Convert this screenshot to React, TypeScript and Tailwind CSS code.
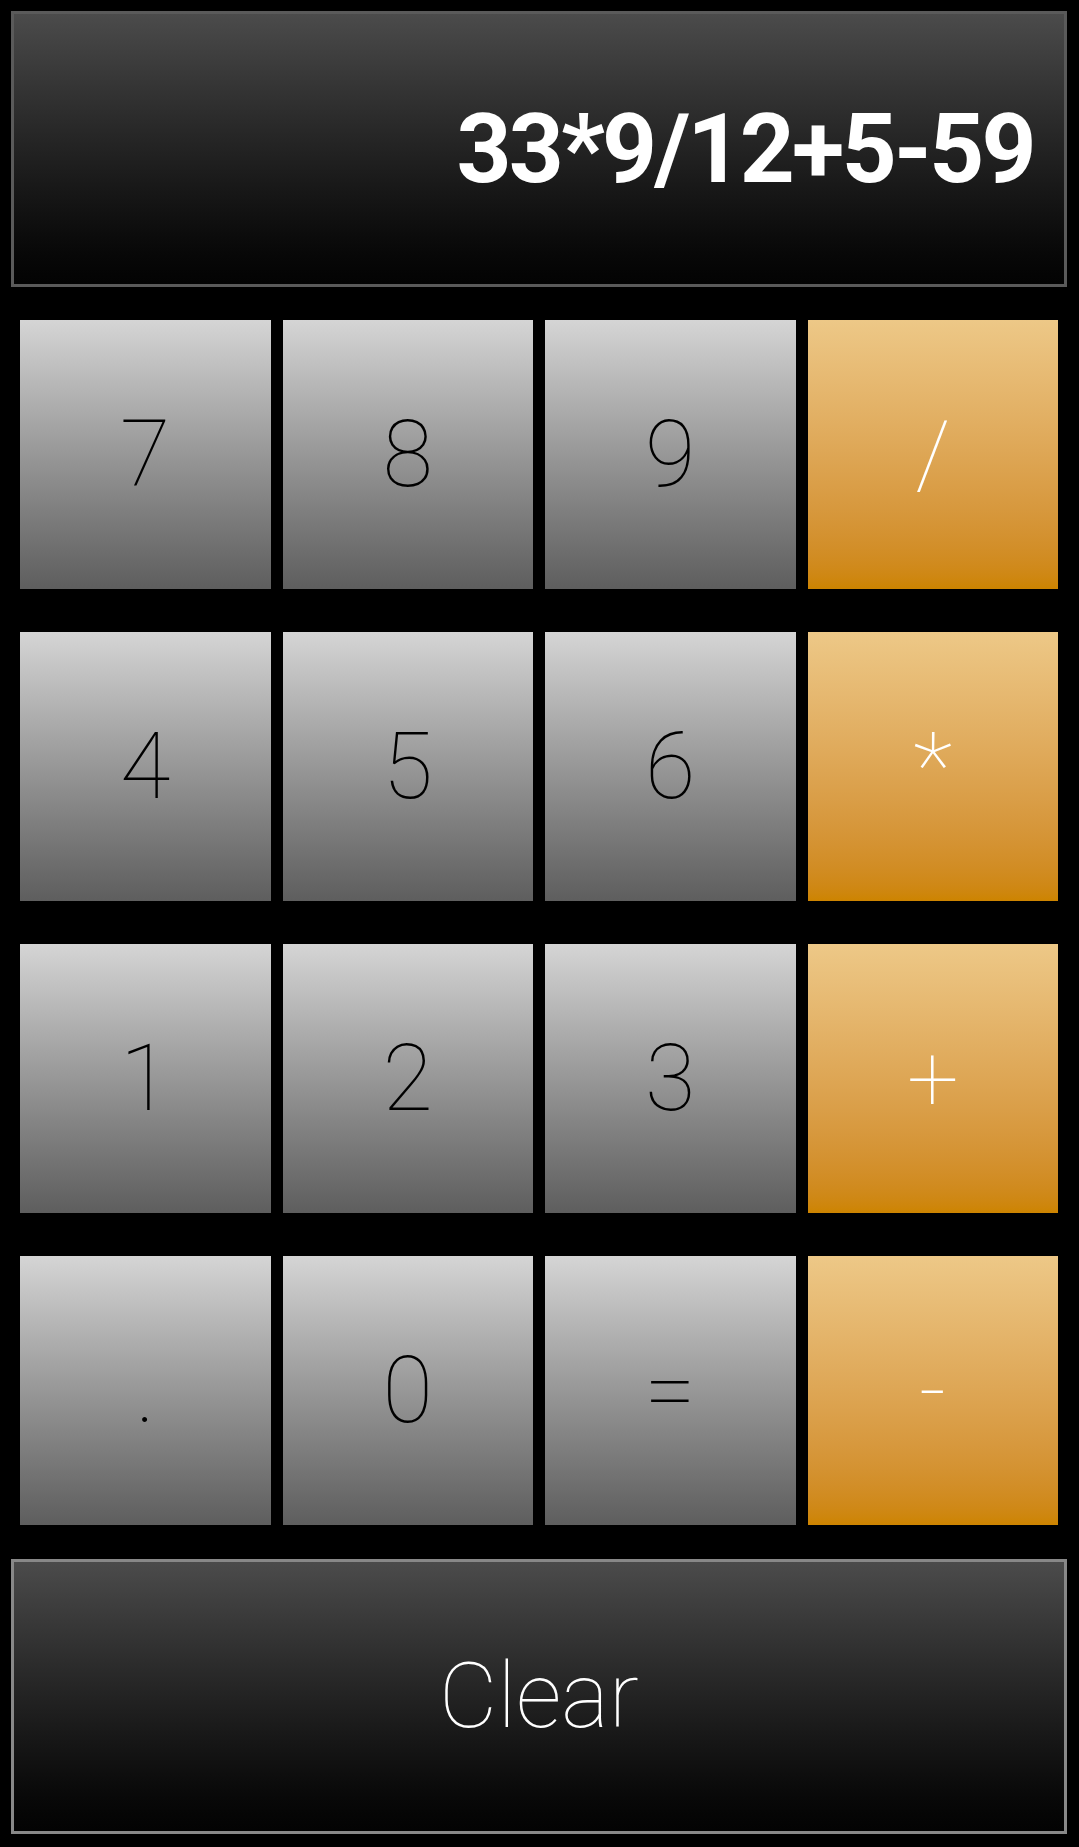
import React from "react";

const keys: { label: string; op?: boolean }[] = [
  { label: "7" }, { label: "8" }, { label: "9" }, { label: "/", op: true },
  { label: "4" }, { label: "5" }, { label: "6" }, { label: "*", op: true },
  { label: "1" }, { label: "2" }, { label: "3" }, { label: "+", op: true },
  { label: "." }, { label: "0" }, { label: "=" }, { label: "-", op: true },
];

export default function App() {
  return (
    <div
      className="w-[1079px] h-[1847px] bg-black pt-[11px] pl-[11px] pr-[12px]"
      style={{ fontFamily: "Roboto, 'Liberation Sans', sans-serif" }}
    >
      <div className="h-[276px] border-[3px] border-[#5a5a5a] bg-gradient-to-b from-[#4b4b4b] to-[#030303] flex items-center justify-end pr-[30px]">
        <span className="text-white font-bold text-[96px] leading-none tracking-[-2.7px]">33*9/12+5-59</span>
      </div>
      <div className="mt-[33px] mx-[9px] grid grid-cols-4 gap-x-[12px] gap-y-[43px]">
        {keys.map((k) => (
          <button
            key={k.label}
            className={
              k.op
                ? "h-[269px] flex items-center justify-center bg-gradient-to-b from-[#edc887] to-[#cd8400] text-white font-thin text-[92px] leading-none"
                : "h-[269px] flex items-center justify-center bg-gradient-to-b from-[#d5d5d5] to-[#5e5e5e] text-black font-thin text-[92px] leading-none"
            }
          >
            {k.label}
          </button>
        ))}
      </div>
      <div className="mt-[34px] h-[275px] border-[3px] border-[#888888] bg-gradient-to-b from-[#4b4b4b] to-[#030303] flex items-center justify-center">
        <span className="text-white font-thin text-[90px] leading-none">Clear</span>
      </div>
    </div>
  );
}
